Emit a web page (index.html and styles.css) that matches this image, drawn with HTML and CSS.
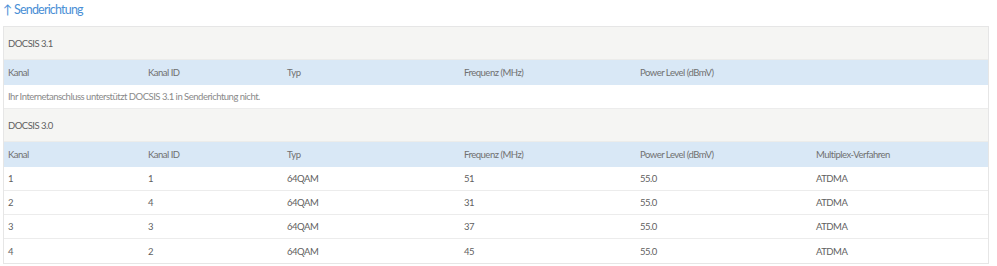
FILE: index.html
```html
<!DOCTYPE html>
<html lang="de">
<head>
<meta charset="utf-8">
<link rel="stylesheet" href="styles.css">
</head>
<body>
<h2 class="title">↑ Senderichtung</h2>
<div class="table">
  <div class="group">DOCSIS 3.1</div>
  <div class="row head">
    <div>Kanal</div><div>Kanal ID</div><div>Typ</div><div>Frequenz (MHz)</div><div>Power Level (dBmV)</div><div></div>
  </div>
  <div class="note">Ihr Internetanschluss unterstützt DOCSIS 3.1 in Senderichtung nicht.</div>
  <div class="group">DOCSIS 3.0</div>
  <div class="row head">
    <div>Kanal</div><div>Kanal ID</div><div>Typ</div><div>Frequenz (MHz)</div><div>Power Level (dBmV)</div><div>Multiplex-Verfahren</div>
  </div>
  <div class="row">
    <div>1</div><div>1</div><div>64QAM</div><div>51</div><div>55.0</div><div>ATDMA</div>
  </div>
  <div class="row">
    <div>2</div><div>4</div><div>64QAM</div><div>31</div><div>55.0</div><div>ATDMA</div>
  </div>
  <div class="row">
    <div>3</div><div>3</div><div>64QAM</div><div>37</div><div>55.0</div><div>ATDMA</div>
  </div>
  <div class="row">
    <div>4</div><div>2</div><div>64QAM</div><div>45</div><div>55.0</div><div>ATDMA</div>
  </div>
</div>
</body>
</html>
```
FILE: styles.css
```css
* { box-sizing: border-box; }
body {
  margin: 0;
  padding: 0 0 0 3px;
  background: #fff;
  font-family: "Lato", "Open Sans", sans-serif;
  color: #5f5f5f;
  font-size: 9.5px;
  letter-spacing: -0.5px;
}
.title {
  margin: 0;
  padding-top: 1px;
  height: 26px;
  font-size: 12.5px;
  font-weight: 400;
  letter-spacing: -0.8px;
  color: #4a8fd6;
  line-height: 17px;
}
.table {
  width: 986px;
  border: 1px solid #e6e6e6;
}
.group {
  height: 33px;
  background: #f5f5f3;
  padding-left: 4px;
  display: flex;
  align-items: center;
  border-bottom: 1px solid #ececea;
}
.row {
  display: grid;
  grid-template-columns: 140px 139px 177px 176px 176px 1fr;
  height: 24px;
  align-items: center;
  border-bottom: 1px solid #ececec;
}
.row > div { padding-left: 4px; }
.row:last-child { border-bottom: 0; }
.head {
  background: #d9e8f6;
  height: 25px;
  border-bottom: 0;
  color: #707070;
}
.note {
  height: 24px;
  padding-left: 4px;
  display: flex;
  align-items: center;
  border-bottom: 1px solid #ececec;
  color: #8a8a8a;
}
```
